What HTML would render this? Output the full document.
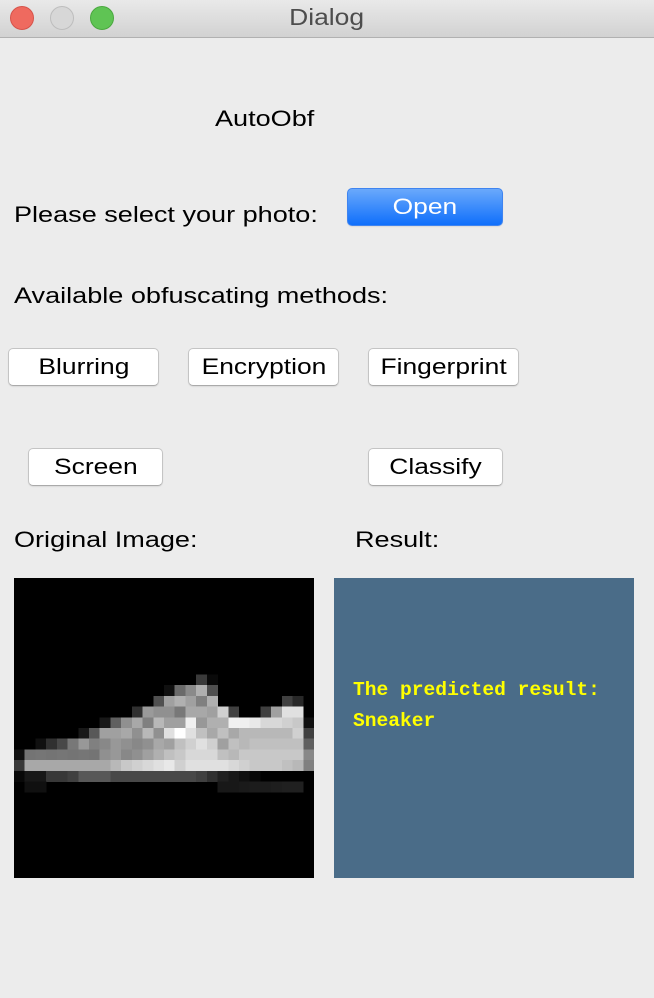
<!DOCTYPE html>
<html><head><meta charset="utf-8"><style>
html,body{margin:0;padding:0}
body{width:654px;height:998px;background:#ececec;position:relative;overflow:hidden;font-family:"Liberation Sans",sans-serif;color:#000}
.tb{position:absolute;left:0;top:0;width:654px;height:37px;background:linear-gradient(#e9e9e9,#d2d2d2);border-bottom:1px solid #b1b1b1}
.tb .t{position:absolute;left:0;width:654px;top:4px;text-align:center;font-size:23px;color:#4d4d4d}
.tb .t span{display:inline-block;transform:scaleX(1.15)}
.dot{position:absolute;top:6px;width:24px;height:24px;border-radius:50%;box-sizing:border-box}
.l{position:absolute;font-size:22px;white-space:nowrap;transform:scaleX(1.23);transform-origin:0 0}
.b{position:absolute;height:38px;box-sizing:border-box;background:#fff;border:1px solid #c4c4c4;border-bottom-color:#aaa;border-radius:5px;font-size:22px;text-align:center;line-height:36px;box-shadow:0 1px 1px rgba(0,0,0,.08)}
.b span{display:inline-block;transform:scaleX(1.2)}
.open{background:linear-gradient(#6aa9fb,#0f6ffb);color:#fff;border:1px solid #3f84f0}
.res{position:absolute;left:334px;top:578px;width:300px;height:300px;background:#4a6c88}
.res div{position:absolute;left:19px;font-family:"Liberation Mono",monospace;font-weight:bold;font-size:19.6px;color:#ffff00;white-space:nowrap}
</style></head><body>
<div class="tb"><div class="dot" style="left:10px;background:#ef6a5f;border:1px solid #d6534a"></div><div class="dot" style="left:50px;background:#d7d7d7;border:1px solid #bdbdbd"></div><div class="dot" style="left:90px;background:#5fc454;border:1px solid #4aa83f"></div><div class="t"><span>Dialog</span></div></div>
<div class="l" style="left:215px;top:106px">AutoObf</div>
<div class="l" style="left:14px;top:202px">Please select your photo:</div>
<div class="b open" style="left:347px;top:188px;width:156px"><span>Open</span></div>
<div class="l" style="left:14px;top:283px">Available obfuscating methods:</div>
<div class="b" style="left:8px;top:348px;width:151px"><span>Blurring</span></div>
<div class="b" style="left:188px;top:348px;width:151px"><span>Encryption</span></div>
<div class="b" style="left:368px;top:348px;width:151px"><span>Fingerprint</span></div>
<div class="b" style="left:28px;top:448px;width:135px"><span>Screen</span></div>
<div class="b" style="left:368px;top:448px;width:135px"><span>Classify</span></div>
<div class="l" style="left:14px;top:527px">Original Image:</div>
<div class="l" style="left:355px;top:527px">Result:</div>
<svg style="position:absolute;left:14px;top:578px" width="300" height="300" viewBox="0 0 28 28" shape-rendering="crispEdges">
<rect width="28" height="28" fill="#000"/>
<g id="px"></g>
</svg>
<div class="res"><div style="top:101px">The predicted result:</div><div style="top:132px">Sneaker</div></div>
<script>
var rows={
9:{17:0x3a,18:0x0a},
10:{14:0x10,15:0x6a,16:0x8a,17:0xb0,18:0x50},
11:{13:0x50,14:0xa0,15:0xb0,16:0xa0,17:0x80,18:0xb0,25:0x40,26:0x28},
12:{11:0x30,12:0x9a,13:0x90,14:0x90,15:0x78,16:0xa8,17:0xa8,18:0xa0,19:0xd0,20:0x40,23:0x40,24:0xa0,25:0xe0,26:0xe0},
13:{8:0x18,9:0x60,10:0x90,11:0xa8,12:0x80,13:0xb8,14:0xa0,15:0xa0,16:0xf0,17:0x98,18:0xb0,19:0xb0,20:0xf0,21:0xf0,22:0xe8,23:0xd8,24:0xd8,25:0xd0,26:0xc8,27:0x10},
14:{6:0x18,7:0x58,8:0xa0,9:0xa0,10:0xa8,11:0x90,12:0xb8,13:0x90,14:0xe0,15:0xff,16:0xe0,17:0xc0,18:0xa8,19:0xc0,20:0xa8,21:0xb8,22:0xb8,23:0xb8,24:0xb8,25:0xb8,26:0xd0,27:0x40},
15:{2:0x10,3:0x30,4:0x48,5:0x78,6:0x98,7:0x80,8:0x88,9:0x98,10:0x90,11:0x88,12:0x90,13:0xa8,14:0xa0,15:0xc0,16:0xd0,17:0xe0,18:0xd0,19:0xa0,20:0xc0,21:0xb8,22:0xc0,23:0xc0,24:0xc0,25:0xc0,26:0xc0,27:0x60},
16:{0:0x10,1:0x74,2:0x76,3:0x74,4:0x76,5:0x74,6:0x76,7:0x74,8:0x90,9:0x98,10:0x88,11:0x90,12:0xa0,13:0xb0,14:0xc0,15:0xc8,16:0xd8,17:0xd8,18:0xd8,19:0xc0,20:0xb8,21:0xc8,22:0xc8,23:0xc8,24:0xc8,25:0xc8,26:0xc8,27:0x88},
17:{0:0x38,1:0xa8,2:0xa8,3:0xa8,4:0xa8,5:0xa8,6:0xa8,7:0xa8,8:0xa8,9:0xb8,10:0xc8,11:0xd0,12:0xd8,13:0xe0,14:0xe8,15:0xd0,16:0xe0,17:0xe0,18:0xe0,19:0xe0,20:0xd8,21:0xd0,22:0xc8,23:0xc8,24:0xc8,25:0xc0,26:0xb8,27:0x80},
18:{0:0x08,1:0x18,2:0x18,3:0x38,4:0x38,5:0x40,6:0x58,7:0x58,8:0x58,9:0x48,10:0x48,11:0x48,12:0x48,13:0x48,14:0x48,15:0x48,16:0x48,17:0x40,18:0x30,19:0x20,20:0x18,21:0x10,22:0x08},
19:{1:0x10,2:0x10,19:0x18,20:0x18,21:0x1a,22:0x1c,23:0x1c,24:0x1e,25:0x20,26:0x20}
};
var s='';
for(var r in rows){for(var c in rows[r]){var v=rows[r][c];s+='<rect x="'+c+'" y="'+r+'" width="1.02" height="1.02" fill="rgb('+v+','+v+','+v+')"/>';}}
document.getElementById('px').innerHTML=s;
</script>
</body></html>
